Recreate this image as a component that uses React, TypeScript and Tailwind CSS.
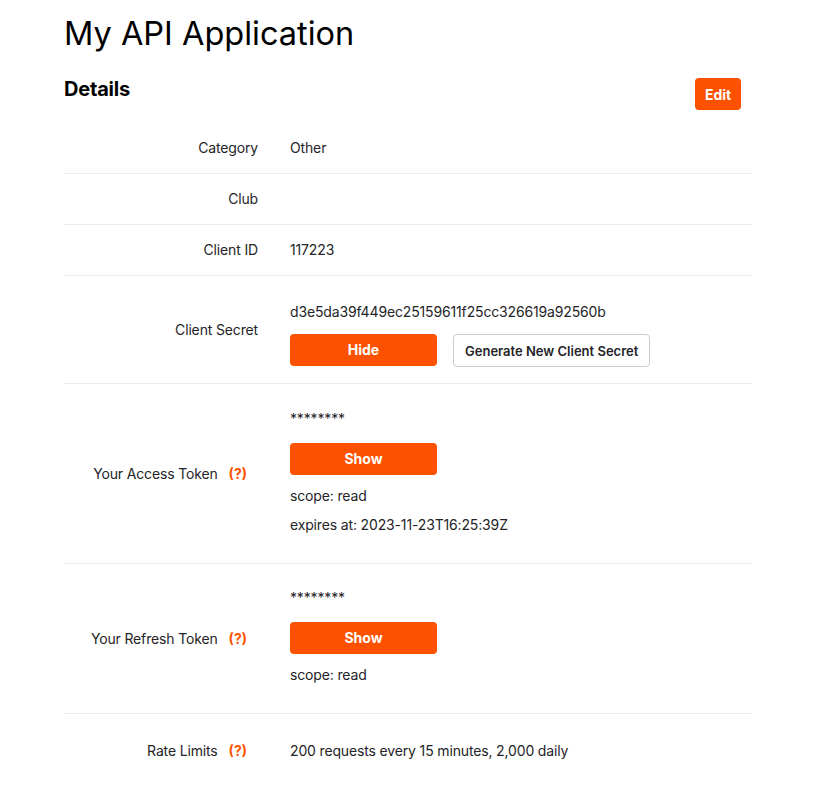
import React from "react";

const font = { fontFamily: "Inter, 'Noto Sans', sans-serif" };

function Q() {
  return <span className="ml-[11px] mr-[11px] font-bold text-[#fc5200] tracking-normal">(?)</span>;
}

function OrangeBtn({ children }: { children: React.ReactNode }) {
  return (
    <button className="h-[32px] w-[147px] rounded-[4px] bg-[#fc5200] text-[14px] font-bold text-white leading-none tracking-normal">
      {children}
    </button>
  );
}

function Row({
  label,
  q,
  children,
  pad,
  last,
}: {
  label: string;
  q?: boolean;
  children?: React.ReactNode;
  pad: string;
  last?: boolean;
}) {
  return (
    <div className={last ? "flex" : "flex border-b border-[#ededed]"}>
      <div className="flex w-[194px] items-center justify-end">
        {label}
        {q && <Q />}
      </div>
      <div className={"ml-[32px] flex flex-col items-start " + pad}>{children}</div>
    </div>
  );
}

export default function App() {
  return (
    <div className="min-h-[785px] bg-white text-[#242428]" style={font}>
      <div className="ml-[64px] w-[688px]">
        <h1 className="pt-[14px] text-[32.5px] leading-[40px] font-normal text-[#000]">My API Application</h1>
        <div className="mt-[21px] flex items-start justify-between pr-[11px]">
          <h2 className="text-[20px] leading-[28px] font-bold text-[#000] tracking-[-0.2px]">Details</h2>
          <button className="mt-[3px] h-[32px] w-[46px] rounded-[4px] bg-[#fc5200] text-[14px] font-bold text-white">
            Edit
          </button>
        </div>
        <div className="mt-[13px] text-[14px] leading-[20px] tracking-[-0.15px]">
          <Row label="Category" pad="py-[15px]">
            <div>Other</div>
          </Row>
          <Row label="Club" pad="py-[15px]">
            <div className="h-[20px]"></div>
          </Row>
          <Row label="Client ID" pad="py-[15px]">
            <div>117223</div>
          </Row>
          <Row label="Client Secret" pad="pt-[26px] pb-[16px]">
            <div>d3e5da39f449ec25159611f25cc326619a92560b</div>
            <div className="mt-[12px] flex gap-[16px]">
              <OrangeBtn>Hide</OrangeBtn>
              <button className="h-[33px] rounded-[4px] border border-[#cccccc] bg-white px-[11px] text-[13px] font-semibold text-[#242428] tracking-normal">
                Generate New Client Secret
              </button>
            </div>
          </Row>
          <Row label="Your Access Token" q pad="pt-[25px] pb-[28px]">
            <div>********</div>
            <div className="mt-[14px]">
              <OrangeBtn>Show</OrangeBtn>
            </div>
            <div className="mt-[11px]">scope: read</div>
            <div className="mt-[9px]">expires at: 2023-11-23T16:25:39Z</div>
          </Row>
          <Row label="Your Refresh Token" q pad="pt-[24px] pb-[28px]">
            <div>********</div>
            <div className="mt-[14px]">
              <OrangeBtn>Show</OrangeBtn>
            </div>
            <div className="mt-[11px]">scope: read</div>
          </Row>
          <Row label="Rate Limits" q pad="pt-[27px] pb-[27px]" last>
            <div>200 requests every 15 minutes, 2,000 daily</div>
          </Row>
        </div>
      </div>
    </div>
  );
}
